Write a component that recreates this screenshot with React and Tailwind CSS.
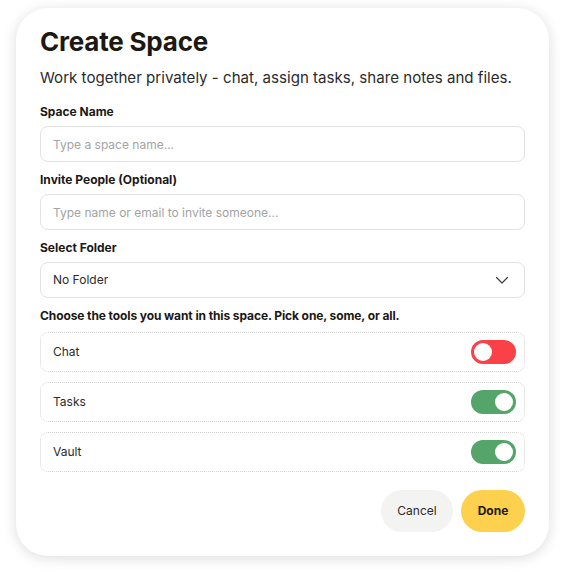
import { useState } from 'react';

const tools = [
  { name: 'Chat', on: false },
  { name: 'Tasks', on: true },
  { name: 'Vault', on: true },
];

export default function App() {
  const [state, setState] = useState(tools.map((t) => t.on));

  return (
    <div className="min-h-[572px] bg-white px-4 pt-2 font-['Inter',sans-serif]">
      <div className="w-[533px] rounded-[32px] bg-white px-6 pb-6 pt-[19px] shadow-[0_2px_14px_rgba(0,0,0,0.14)]">
        <h1 className="text-[26px] font-bold leading-[30px] tracking-[-0.2px] text-[#1c1814]">Create Space</h1>
        <p className="mt-[9px] text-[15.1px] leading-6 text-[#2b2b2b]">
          Work together privately - chat, assign tasks, share notes and files.
        </p>

        {/* Space name */}
        <Label className="mt-[13px]">Space Name</Label>
        <input
          className="mt-[5px] h-9 w-full rounded-lg border border-[#e2e2e2] px-3 text-[12px] text-[#2b2b2b] outline-none placeholder:text-[#a3a3a3]"
          placeholder="Type a space name..."
        />

        <Label className="mt-[9px]">Invite People (Optional)</Label>
        <input
          className="mt-[5px] h-9 w-full rounded-lg border border-[#e2e2e2] px-3 text-[12px] text-[#2b2b2b] outline-none placeholder:text-[#a3a3a3]"
          placeholder="Type name or email to invite someone..."
        />

        <Label className="mt-[9px]">Select Folder</Label>
        <div className="mt-[5px] flex h-9 w-full items-center justify-between rounded-lg border border-[#e2e2e2] px-3 text-[12px] text-[#2b2b2b]">
          <span>No Folder</span>
          <svg width="14" height="14" viewBox="0 0 14 14" fill="none" className="mr-[3px]">
            <path d="M1.5 4.5 7 10l5.5-5.5" stroke="#444" strokeWidth="1.3" strokeLinecap="round" strokeLinejoin="round" />
          </svg>
        </div>

        <Label className="mt-[9px] tracking-[-0.1px]">Choose the tools you want in this space. Pick one, some, or all.</Label>
        <div className="mt-[7px] flex flex-col gap-[10px]">
          {tools.map((t, i) => (
            <div
              key={t.name}
              className="flex h-10 items-center justify-between rounded-lg border border-dotted border-[#d4d4d4] pl-3 pr-2"
            >
              <span className="text-[12px] text-[#2b2b2b]">{t.name}</span>
              <button
                onClick={() => setState((s) => s.map((v, j) => (j === i ? !v : v)))}
                className={`flex h-6 w-[45px] items-center rounded-full px-[3px] ${
                  state[i] ? 'justify-end bg-[#55a56b]' : 'justify-start bg-[#fb4148]'
                }`}
              >
                <span className="h-[18px] w-[18px] rounded-full bg-white" />
              </button>
            </div>
          ))}
        </div>

        <div className="mt-[18px] flex justify-end gap-2">
          <button className="h-[42px] w-[72px] rounded-full bg-[#f3f3f2] text-[12px] text-[#2b2b2b]">Cancel</button>
          <button className="h-[42px] w-16 rounded-full bg-[#fdd04e] text-[12px] font-bold text-[#1c1814]">Done</button>
        </div>
      </div>
    </div>
  );
}

function Label({ children, className = '' }) {
  return <div className={`text-[12px] font-bold leading-[18px] text-[#1c1814] ${className}`}>{children}</div>;
}
